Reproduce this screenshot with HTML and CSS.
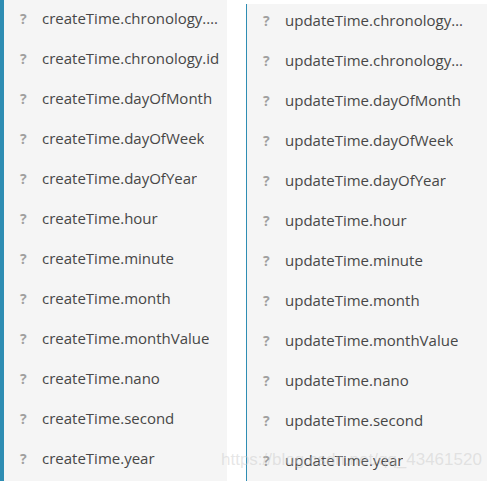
FILE: index.html
```html
<!DOCTYPE html>
<html>
<head>
<meta charset="utf-8">
<link rel="stylesheet" href="styles.css">
</head>
<body>
<div class="wrap">
  <div class="panel panel-left">
    <ul class="list list-left">
      <li class="row"><span class="q">?</span><span class="name">createTime.chronology.calendarType</span></li>
      <li class="row"><span class="q">?</span><span class="name">createTime.chronology.id</span></li>
      <li class="row"><span class="q">?</span><span class="name">createTime.dayOfMonth</span></li>
      <li class="row"><span class="q">?</span><span class="name">createTime.dayOfWeek</span></li>
      <li class="row"><span class="q">?</span><span class="name">createTime.dayOfYear</span></li>
      <li class="row"><span class="q">?</span><span class="name">createTime.hour</span></li>
      <li class="row"><span class="q">?</span><span class="name">createTime.minute</span></li>
      <li class="row"><span class="q">?</span><span class="name">createTime.month</span></li>
      <li class="row"><span class="q">?</span><span class="name">createTime.monthValue</span></li>
      <li class="row"><span class="q">?</span><span class="name">createTime.nano</span></li>
      <li class="row"><span class="q">?</span><span class="name">createTime.second</span></li>
      <li class="row"><span class="q">?</span><span class="name">createTime.year</span></li>
    </ul>
  </div>
  <div class="panel panel-right">
    <ul class="list list-right">
      <li class="row"><span class="q">?</span><span class="name">updateTime.chronology.calendarType</span></li>
      <li class="row"><span class="q">?</span><span class="name">updateTime.chronology.id</span></li>
      <li class="row"><span class="q">?</span><span class="name">updateTime.dayOfMonth</span></li>
      <li class="row"><span class="q">?</span><span class="name">updateTime.dayOfWeek</span></li>
      <li class="row"><span class="q">?</span><span class="name">updateTime.dayOfYear</span></li>
      <li class="row"><span class="q">?</span><span class="name">updateTime.hour</span></li>
      <li class="row"><span class="q">?</span><span class="name">updateTime.minute</span></li>
      <li class="row"><span class="q">?</span><span class="name">updateTime.month</span></li>
      <li class="row"><span class="q">?</span><span class="name">updateTime.monthValue</span></li>
      <li class="row"><span class="q">?</span><span class="name">updateTime.nano</span></li>
      <li class="row"><span class="q">?</span><span class="name">updateTime.second</span></li>
      <li class="row"><span class="q">?</span><span class="name">updateTime.year</span></li>
    </ul>
  </div>
</div>
<div class="watermark">https://blog.csdn.net/qq_43461520</div>
</body>
</html>
```

FILE: styles.css
```css
html, body {
  margin: 0;
  padding: 0;
  background: #ffffff;
  width: 490px;
  height: 481px;
  overflow: hidden;
}

body {
  position: relative;
  font-family: "Open Sans", "Noto Sans", sans-serif;
}

.wrap {
  display: flex;
  gap: 19px;
  height: 481px;
}

.panel {
  background: #f5f5f5;
  overflow: hidden;
}

.panel-left {
  width: 223px;
  border-left: 4px solid #2e8db3;
  height: 481px;
}

.panel-right {
  width: 240px;
  margin-top: 4px;
  border-left: 1px solid #2e8db3;
  height: 477px;
}

.list {
  list-style: none;
  margin: 0;
  padding: 0;
}

.list-left {
  margin-top: -2px;
  padding-left: 15px;
}

.list-right {
  margin-top: -4px;
  padding-left: 15px;
}

.row {
  height: 40px;
  display: flex;
  align-items: center;
  white-space: nowrap;
}

.q {
  width: 22px;
  flex: none;
  font-size: 14px;
  font-weight: 700;
  color: #a0a0a0;
  padding-left: 1px;
}

.name {
  font-size: 15px;
  color: #474747;
  overflow: hidden;
  text-overflow: ellipsis;
  min-width: 0;
}

.list-left .name {
  max-width: 178px;
}

.list-right .name {
  max-width: 180px;
}

.watermark {
  position: absolute;
  left: 221px;
  top: 450px;
  font-family: "Liberation Sans", Arial, sans-serif;
  font-size: 17px;
  color: rgba(200, 200, 200, 0.45);
  white-space: nowrap;
  pointer-events: none;
}
```
